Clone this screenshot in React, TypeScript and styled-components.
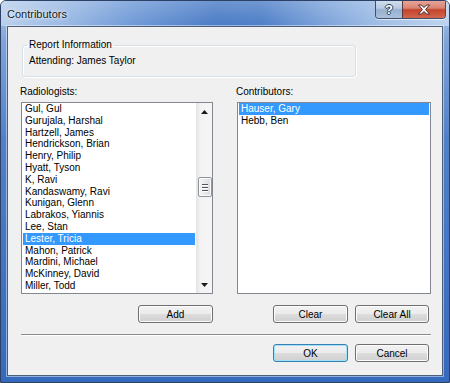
import styled, { createGlobalStyle, css } from 'styled-components'

const GlobalStyle = createGlobalStyle`
  html, body {
    margin: 0;
    padding: 0;
    background: #ffffff;
  }
  * {
    box-sizing: border-box;
  }
`

const Frame = styled.div`
  width: 450px;
  height: 383px;
  display: flex;
  flex-direction: column;
  border: 1px solid #2d4066;
  border-radius: 6px 6px 0 0;
  background: linear-gradient(to bottom, #b4cbe9 0px, #7fa4da 40px, #4f80c8 140px, #3569bd 100%);
  font-family: 'Liberation Sans', Arial, sans-serif;
  overflow: hidden;
`

const TitleBar = styled.div`
  height: 25px;
  flex: none;
  display: flex;
  align-items: flex-start;
  justify-content: space-between;
  padding-left: 6px;
  background:
    linear-gradient(to bottom, rgba(255, 255, 255, 0.2), rgba(255, 255, 255, 0) 100%),
    linear-gradient(to right, #b8cfeb 0%, #9ab9e4 14%, #6d98d6 30%, #4a7bc5 48%, #4d7ec7 58%, #7ba2da 72%, #a3c0e7 86%, #bdd3ee 100%);
`

const Title = styled.span`
  font-size: 11px;
  line-height: 13px;
  margin-top: 7px;
  color: #101820;
  text-shadow: 0 0 5px rgba(255, 255, 255, 0.95), 0 0 2px rgba(255, 255, 255, 0.9);
`

const CaptionGroup = styled.div`
  display: flex;
  margin-right: 3px;
  margin-top: -1px;
  border: 1px solid #3d4f6a;
  border-top: none;
  border-radius: 0 0 4px 4px;
  overflow: hidden;
  box-shadow: 0 1px 0 rgba(255, 255, 255, 0.6);
`

const CaptionButton = styled.div<{ $close?: boolean }>`
  height: 18px;
  display: flex;
  align-items: center;
  justify-content: center;
  ${p =>
    p.$close
      ? css`
          width: 43px;
          background: linear-gradient(to bottom, #e8a99d 0%, #d98472 45%, #c4432b 55%, #d2674e 100%);
          border-left: 1px solid #5a3a3a;
        `
      : css`
          width: 26px;
          background: linear-gradient(to bottom, #d3e0ef 0%, #b9cbe2 45%, #98b0cf 55%, #aac0dc 100%);
        `}
`

const HelpGlyph = styled.span`
  font-size: 13px;
  font-weight: bold;
  line-height: 13px;
  color: #ffffff;
  text-shadow: 0 0 1px #2a3a50, 1px 0 0 #34465f, -1px 0 0 #34465f, 0 1px 0 #34465f, 0 -1px 0 #34465f;
`

const Client = styled.div`
  flex: 1;
  margin: 0 6px 6px 6px;
  display: flex;
  flex-direction: column;
  padding: 12px 11px 0 13px;
  background: #f0f0f0;
  border: 1px solid #4c5e78;
  box-shadow: 0 0 0 1px rgba(255, 255, 255, 0.45);
  font-size: 10px;
  color: #000000;
`

const GroupBox = styled.fieldset`
  margin: 0 0 0 1px;
  width: 334px;
  padding: 4px 6px 9px;
  border: 1px solid #d5dfe5;
  border-radius: 3px;
  box-shadow: inset 1px 1px 0 #ffffff, 1px 1px 0 #ffffff;
`

const Legend = styled.legend`
  padding: 0 2px;
  margin-left: -2px;
  line-height: 12px;
  font-size: 10px;
`

const Text = styled.div`
  line-height: 12px;
`

const Columns = styled.div`
  display: grid;
  grid-template-columns: 192px 194px;
  column-gap: 24px;
  margin-top: 9px;
`

const Column = styled.div`
  display: flex;
  flex-direction: column;
`

const FieldLabel = styled.div`
  line-height: 12px;
  margin-bottom: 4px;
  margin-left: -1px;
`

const ListBox = styled.div`
  height: 192px;
  display: flex;
  background: #ffffff;
  border: 1px solid #828790;
  overflow: hidden;
`

const Items = styled.div`
  flex: 1;
  padding: 0 1px;
`

const Item = styled.div<{ $selected?: boolean }>`
  height: 11.8px;
  line-height: 11.8px;
  padding-left: 2px;
  white-space: nowrap;
  color: ${p => (p.$selected ? '#ffffff' : '#000000')};
  background: ${p => (p.$selected ? '#3399ff' : 'transparent')};
`

const ScrollBar = styled.div`
  width: 16px;
  display: flex;
  flex-direction: column;
  background: linear-gradient(to right, #e4e4e4 0px, #f3f3f3 3px, #f5f5f5 100%);
  border-left: 1px solid #e6e6e6;
`

const ScrollArrow = styled.div`
  height: 17px;
  display: flex;
  align-items: center;
  justify-content: center;
`

const Track = styled.div`
  flex: 1;
  display: flex;
  flex-direction: column;
  align-items: center;
`

const Thumb = styled.div`
  width: 14px;
  height: 20px;
  margin-top: 57px;
  border: 1px solid #8f959e;
  border-radius: 2px;
  background: linear-gradient(to right, #f4f4f4 0%, #e9e9e9 50%, #d9d9d9 100%);
  box-shadow: inset 0 0 0 1px #fbfbfb;
  display: flex;
  flex-direction: column;
  align-items: center;
  justify-content: center;
  gap: 2px;
`

const Grip = styled.div`
  width: 6px;
  height: 1px;
  background: #4f545c;
  box-shadow: 0 1px 0 #ffffff;
`

const ButtonRow = styled.div<{ $inset?: number; $top: number }>`
  display: flex;
  justify-content: flex-end;
  gap: 7px;
  margin-top: ${p => p.$top}px;
  padding-right: ${p => p.$inset ?? 0}px;
`

const Button = styled.div<{ $default?: boolean; $width?: number }>`
  width: ${p => p.$width ?? 75}px;
  height: 18px;
  display: flex;
  align-items: center;
  justify-content: center;
  font-size: 10px;
  color: #000000;
  border: 1px solid ${p => (p.$default ? '#3c7fb1' : '#707070')};
  border-radius: 3px;
  background: linear-gradient(to bottom, #f2f2f2 0%, #ebebeb 50%, #dddddd 51%, #cfcfcf 100%);
  box-shadow: inset 0 0 0 1px ${p => (p.$default ? '#9fe2fb' : '#fcfcfc')};
`

const Separator = styled.div`
  height: 1px;
  margin-top: 11px;
  background: #8c8c8c;
  box-shadow: 0 1px 0 #ffffff;
`

const radiologists = [
  'Gul, Gul',
  'Gurujala, Harshal',
  'Hartzell, James',
  'Hendrickson, Brian',
  'Henry, Philip',
  'Hyatt, Tyson',
  'K, Ravi',
  'Kandaswamy, Ravi',
  'Kunigan, Glenn',
  'Labrakos, Yiannis',
  'Lee, Stan',
  'Lester, Tricia',
  'Mahon, Patrick',
  'Mardini, Michael',
  'McKinney, David',
  'Miller, Todd',
]

const contributors = ['Hauser, Gary', 'Hebb, Ben']

function CloseIcon() {
  return (
    <svg width="14" height="11" viewBox="0 0 14 11">
      <path
        d="M1.5 1 L4.5 1 L7 3.6 L9.5 1 L12.5 1 L8.6 5.5 L12.5 10 L9.5 10 L7 7.4 L4.5 10 L1.5 10 L5.4 5.5 Z"
        fill="#ffffff"
        stroke="#4a2a28"
        strokeWidth="1"
        strokeLinejoin="round"
      />
    </svg>
  )
}

function Arrow({ up }: { up?: boolean }) {
  return (
    <svg width="7" height="4" viewBox="0 0 7 4">
      <path d={up ? 'M3.5 0 L7 4 L0 4 Z' : 'M0 0 L7 0 L3.5 4 Z'} fill="#1a1a1a" />
    </svg>
  )
}

export default function App() {
  return (
    <>
      <GlobalStyle />
      <Frame>
        <TitleBar>
          <Title>Contributors</Title>
          <CaptionGroup>
            <CaptionButton>
              <HelpGlyph>?</HelpGlyph>
            </CaptionButton>
            <CaptionButton $close>
              <CloseIcon />
            </CaptionButton>
          </CaptionGroup>
        </TitleBar>
        <Client>
          <GroupBox>
            <Legend>Report Information</Legend>
            <Text>Attending: James Taylor</Text>
          </GroupBox>
          <Columns>
            <Column>
              <FieldLabel>Radiologists:</FieldLabel>
              <ListBox>
                <Items>
                  {radiologists.map(name => (
                    <Item key={name} $selected={name === 'Lester, Tricia'}>
                      {name}
                    </Item>
                  ))}
                </Items>
                <ScrollBar>
                  <ScrollArrow>
                    <Arrow up />
                  </ScrollArrow>
                  <Track>
                    <Thumb>
                      <Grip />
                      <Grip />
                      <Grip />
                    </Thumb>
                  </Track>
                  <ScrollArrow>
                    <Arrow />
                  </ScrollArrow>
                </ScrollBar>
              </ListBox>
              <ButtonRow $top={11}>
                <Button>Add</Button>
              </ButtonRow>
            </Column>
            <Column>
              <FieldLabel>Contributors:</FieldLabel>
              <ListBox>
                <Items>
                  {contributors.map(name => (
                    <Item key={name} $selected={name === 'Hauser, Gary'}>
                      {name}
                    </Item>
                  ))}
                </Items>
              </ListBox>
              <ButtonRow $top={11} $inset={2}>
                <Button>Clear</Button>
                <Button $width={74}>Clear All</Button>
              </ButtonRow>
            </Column>
          </Columns>
          <Separator />
          <ButtonRow $top={9} $inset={2}>
            <Button $default>OK</Button>
            <Button $width={74}>Cancel</Button>
          </ButtonRow>
        </Client>
      </Frame>
    </>
  )
}
